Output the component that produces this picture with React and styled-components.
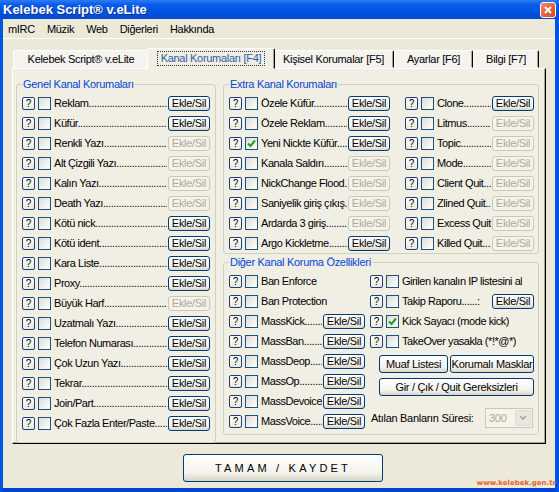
import React from 'react';
import styled, { createGlobalStyle } from 'styled-components';

const Global = createGlobalStyle`
  body {
    margin: 0;
    background: #ece9d8;
    font-family: "Liberation Sans", Arial, sans-serif;
    font-size: 11px;
    letter-spacing: -0.3px;
    color: #000;
  }
`;

// window frame
const Frame = styled.div`
  position: relative;
  width: 559px;
  height: 492px;
  display: flex;
  flex-direction: column;
`;

const TitleBar = styled.div`
  height: 19px;
  display: flex;
  align-items: center;
  justify-content: space-between;
  padding: 0 3px 0 3px;
  background: linear-gradient(#2b7cf6 0%, #0a5ae8 25%, #0054e3 60%, #0049d0 100%);
  color: #fff;
  font-weight: bold;
  font-size: 13px;
  letter-spacing: 0;
  text-shadow: 1px 1px #0a2f8a;
`;

const CloseBox = styled.div`
  width: 14px;
  height: 14px;
  border: 1px solid #fff;
  border-radius: 3px;
  background: linear-gradient(135deg, #f08a6a, #d9431c);
  display: flex;
  align-items: center;
  justify-content: center;
`;

const Client = styled.div`
  flex: 1;
  display: flex;
  flex-direction: column;
  background: #ece9d8;
  border-left: 3px solid #0054e3;
  border-right: 4px solid #0054e3;
  border-bottom: 4px solid #0046d0;
`;

const MenuBar = styled.div`
  height: 19px;
  display: flex;
  align-items: center;
  gap: 12px;
  padding-left: 5px;
  border-bottom: 1px solid #fff;
`;

const MenuItem = styled.span`
  font-size: 11px;
`;

const Body = styled.div`
  padding: 9px 9px 0 9px;
`;

// tabs
const TabStrip = styled.div`
  display: flex;
  align-items: flex-end;
  height: 20px;
  padding-left: 1px;
`;

const Tab = styled.div`
  box-sizing: border-box;
  width: ${p => p.$w}px;
  height: ${p => (p.$on ? 21 : 18)}px;
  margin: ${p => (p.$on ? '0 -2px -1px -2px' : '0')};
  position: relative;
  z-index: ${p => (p.$on ? 2 : 1)};
  display: flex;
  align-items: center;
  justify-content: center;
  background: ${p => (p.$on ? '#f1efe4' : '#f4f3ee')};
  border: 1px solid;
  border-color: #fff #000 transparent #fff;
  border-radius: 2px 2px 0 0;
  box-shadow: inset -1px 0 #aca899;
  color: ${p => (p.$on ? '#2d5da6' : '#000')};
  font-size: 11px;
  white-space: nowrap;
`;

const Focus = styled.span`
  border: 1px dotted #333;
  padding: 0 3px 1px;
`;

const Panel = styled.div`
  box-sizing: border-box;
  height: 376px;
  background: #f1efe4;
  border: 1px solid;
  border-color: #fff #000 #000 #fff;
  box-shadow: inset -1px -1px #aca899;
  padding: 9px 6px 0 3px;
  display: grid;
  grid-template-columns: 200px 1fr;
  column-gap: 7px;
`;

const Group = styled.fieldset`
  margin: 0;
  padding: 0 ${p => p.$pr || 5}px ${p => p.$pb || 0}px 5px;
  border: 1px solid #d0d0bf;
  border-radius: 3px;
  min-width: 0;
`;

const Legend = styled.legend`
  color: #0046d5;
  font-size: 11px;
  line-height: 13px;
  padding: 0 1px;
  margin-left: 0;
`;

const Stack = styled.div`
  display: flex;
  flex-direction: column;
  gap: 2px;
`;

const Rows = styled.div`
  margin-top: 2px;
  display: flex;
  flex-direction: column;
`;

const Split = styled.div`
  margin-top: 2px;
  display: flex;
  gap: ${p => p.$gap}px;
`;

const Col = styled.div`
  width: ${p => p.$w}px;
  display: flex;
  flex-direction: column;
`;

const Row = styled.div`
  height: 20px;
  display: flex;
  align-items: center;
`;

const Help = styled.span`
  box-sizing: border-box;
  width: 13px;
  height: 13px;
  flex: none;
  border: 1px solid #1b3f78;
  border-radius: 2px;
  background: linear-gradient(#fff, #ece9d8);
  font-size: 10px;
  line-height: 11px;
  letter-spacing: 0;
  text-align: center;
  color: #000;
`;

const Box = styled.span`
  box-sizing: border-box;
  width: 13px;
  height: 13px;
  flex: none;
  margin-left: 3px;
  border: 1px solid #1c5180;
  background: linear-gradient(135deg, #dcdcd7, #fff);
  display: flex;
  align-items: center;
  justify-content: center;
`;

const Label = styled.span`
  flex: ${p => (p.$fill ? 1 : 'none')};
  min-width: 0;
  margin: 0 1px 0 3px;
  letter-spacing: -0.45px;
  white-space: nowrap;
  overflow: hidden;
`;

const SmallBtn = styled.span`
  box-sizing: border-box;
  width: 42px;
  height: 15px;
  flex: none;
  margin-left: auto;
  border: 1px solid ${p => (p.$off ? '#c9c7ba' : '#003c74')};
  border-radius: 3px;
  background: ${p => (p.$off ? '#f5f4ea' : 'linear-gradient(#ffffff, #f3f2ec 70%, #d8d4c8)')};
  color: ${p => (p.$off ? '#aca899' : '#000')};
  font-size: 11px;
  line-height: 13px;
  text-align: center;
`;

const BtnRow = styled.div`
  margin: ${p => p.$mt}px 0 0 9px;
  display: flex;
  gap: 2px;
`;

const XpBtn = styled.span`
  box-sizing: border-box;
  width: ${p => p.$w}px;
  height: 18px;
  border: 1px solid #003c74;
  border-radius: 3px;
  background: linear-gradient(#ffffff, #f3f2ec 70%, #d8d4c8);
  display: flex;
  align-items: center;
  justify-content: center;
  font-size: 11px;
  white-space: nowrap;
`;

const BanRow = styled.div`
  margin-top: 12px;
  height: 20px;
  display: flex;
  align-items: center;
  padding-left: 1px;
`;

const Combo = styled.div`
  box-sizing: border-box;
  margin-left: auto;
  margin-right: 1px;
  width: 48px;
  height: 20px;
  border: 1px solid #c9c7ba;
  background: #f5f4ea;
  display: flex;
  align-items: center;
  justify-content: space-between;
  padding: 0 1px 0 3px;
  color: #aca899;
`;

const ComboArrow = styled.span`
  width: 16px;
  height: 16px;
  border-radius: 2px;
  background: #e8e7e0;
  border: 1px solid #dcdad0;
  box-sizing: border-box;
  display: flex;
  align-items: center;
  justify-content: center;
`;

const Footer = styled.div`
  padding: 10px 0 0 180px;
`;

const BigBtn = styled.div`
  box-sizing: border-box;
  width: 200px;
  height: 28px;
  border: 1px solid #003c74;
  border-radius: 3px;
  background: linear-gradient(#ffffff, #f3f2ec 70%, #d8d4c8);
  display: flex;
  align-items: center;
  justify-content: center;
  font-size: 11px;
  letter-spacing: 3.2px;
`;

const Watermark = styled.div`
  position: absolute;
  right: 3px;
  bottom: 5px;
  font-family: "DejaVu Sans", Verdana, sans-serif;
  font-size: 7px;
  font-weight: bold;
  letter-spacing: 0;
  color: #e8602c;
`;

const DOTS = '..................................................';

const Tick = () => (
  <svg width="9" height="9" viewBox="0 0 9 9">
    <path d="M1 4.5 L3.5 7 L8 1.5" fill="none" stroke="#21a121" strokeWidth="2" />
  </svg>
);

const Item = ({ text, btn, off, checked, fill = true }) => (
  <Row>
    <Help>?</Help>
    <Box>{checked && <Tick />}</Box>
    <Label $fill={fill}>{fill ? text + DOTS : text}</Label>
    {btn && <SmallBtn $off={off}>Ekle/Sil</SmallBtn>}
  </Row>
);

const genel = [
  ['Reklam', false], ['Küfür', false], ['Renkli Yazı', true], ['Alt Çizgili Yazı', true],
  ['Kalın Yazı', true], ['Death Yazı', true], ['Kötü nick', false], ['Kötü ident', false],
  ['Kara Liste', false], ['Proxy', false], ['Büyük Harf', true], ['Uzatmalı Yazı', false],
  ['Telefon Numarası', false], ['Çok Uzun Yazı', false], ['Tekrar', false], ['Join/Part', false],
  ['Çok Fazla Enter/Paste', false],
];

const extraLeft = [
  ['Özele Küfür', false], ['Özele Reklam', false], ['Yeni Nickte Küfür', false, true],
  ['Kanala Saldırı', true], ['NickChange Flood', true], ['Saniyelik giriş çıkış', true],
  ['Ardarda 3 giriş', true], ['Argo Kickletme', false],
];

const extraRight = [
  ['Clone', false], ['Litmus', true], ['Topic', true], ['Mode', true],
  ['Client Quit', true], ['Zlined Quit', true], ['Excess Quit', true], ['Killed Quit', true],
];

const massList = ['MassKick', 'MassBan', 'MassDeop', 'MassOp', 'MassDevoice', 'MassVoice'];

const tabs = [
  ['Kelebek Script® v.eLite', 136],
  ['Kanal Korumaları [F4]', 128, true],
  ['Kişisel Korumalar [F5]', 121],
  ['Ayarlar [F6]', 79],
  ['Bilgi [F7]', 66],
];

export default function App() {
  return (
    <>
      <Global />
      <Frame>
        <TitleBar>
          <span>Kelebek Script® v.eLite</span>
          <CloseBox>
            <svg width="8" height="8" viewBox="0 0 8 8">
              <path d="M1 1 L7 7 M7 1 L1 7" stroke="#fff" strokeWidth="1.8" />
            </svg>
          </CloseBox>
        </TitleBar>
        <Client>
          <MenuBar>
            {['mIRC', 'Müzik', 'Web', 'Diğerleri', 'Hakkında'].map(m => (
              <MenuItem key={m}>{m}</MenuItem>
            ))}
          </MenuBar>
          <Body>
            <TabStrip>
              {tabs.map(([t, w, on]) => (
                <Tab key={t} $w={w} $on={on}>
                  {on ? <Focus>{t}</Focus> : t}
                </Tab>
              ))}
            </TabStrip>
            <Panel>
              <Group $pb={4}>
                <Legend>Genel Kanal Korumaları</Legend>
                <Rows>
                  {genel.map(([t, off]) => (
                    <Item key={t} text={t} btn off={off} />
                  ))}
                </Rows>
              </Group>
              <Stack>
                <Group $pr={4}>
                  <Legend>Extra Kanal Korumaları</Legend>
                  <Split $gap={15}>
                    <Col $w={161}>
                      {extraLeft.map(([t, off, c]) => (
                        <Item key={t} text={t} btn off={off} checked={c} />
                      ))}
                    </Col>
                    <Col $w={129}>
                      {extraRight.map(([t, off]) => (
                        <Item key={t} text={t} btn off={off} />
                      ))}
                    </Col>
                  </Split>
                </Group>
                <Group $pr={4} $pb={3}>
                  <Legend>Diğer Kanal Koruma Özellikleri</Legend>
                  <Split $gap={5}>
                    <Col $w={136}>
                      <Item text="Ban Enforce" fill={false} />
                      <Item text="Ban Protection" fill={false} />
                      {massList.map(t => (
                        <Item key={t} text={t} btn />
                      ))}
                    </Col>
                    <Col $w={164}>
                      <Item text="Girilen kanalın IP listesini al" fill={false} />
                      <Item text="Takip Raporu......:" fill={false} btn />
                      <Item text="Kick Sayacı (mode kick)" fill={false} checked />
                      <Item text="TakeOver yasakla (*!*@*)" fill={false} />
                      <BtnRow $mt={4}>
                        <XpBtn $w={69}>Muaf Listesi</XpBtn>
                        <XpBtn $w={84}>Korumalı Masklar</XpBtn>
                      </BtnRow>
                      <BtnRow $mt={5}>
                        <XpBtn $w={155}>Gir / Çık / Quit Gereksizleri</XpBtn>
                      </BtnRow>
                      <BanRow>
                        <span>Atılan Banların Süresi:</span>
                        <Combo>
                          300
                          <ComboArrow>
                            <svg width="8" height="6" viewBox="0 0 8 6">
                              <path d="M1 1 L4 4 L7 1" fill="none" stroke="#aca899" strokeWidth="1.6" />
                            </svg>
                          </ComboArrow>
                        </Combo>
                      </BanRow>
                    </Col>
                  </Split>
                </Group>
              </Stack>
            </Panel>
          </Body>
          <Footer>
            <BigBtn>TAMAM / KAYDET</BigBtn>
          </Footer>
        </Client>
        <Watermark>www.kelebek.gen.tr</Watermark>
      </Frame>
    </>
  );
}
